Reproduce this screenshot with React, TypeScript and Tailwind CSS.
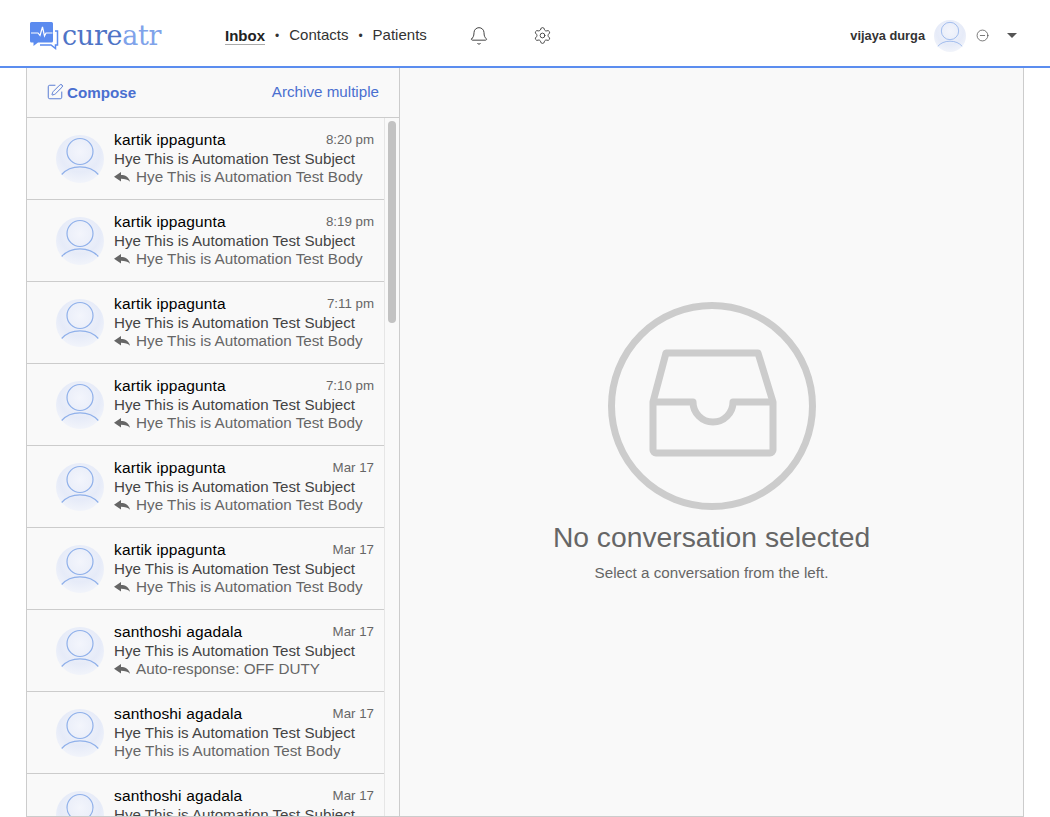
import { Bell, Settings, SquarePen, CircleMinus } from "lucide-react";

const font = "font-['Liberation_Sans',Arial,sans-serif]";

type Msg = { name: string; time: string; body: string; reply: boolean };

const messages: Msg[] = [
  { name: "kartik ippagunta", time: "8:20 pm", body: "Hye This is Automation Test Body", reply: true },
  { name: "kartik ippagunta", time: "8:19 pm", body: "Hye This is Automation Test Body", reply: true },
  { name: "kartik ippagunta", time: "7:11 pm", body: "Hye This is Automation Test Body", reply: true },
  { name: "kartik ippagunta", time: "7:10 pm", body: "Hye This is Automation Test Body", reply: true },
  { name: "kartik ippagunta", time: "Mar 17", body: "Hye This is Automation Test Body", reply: true },
  { name: "kartik ippagunta", time: "Mar 17", body: "Hye This is Automation Test Body", reply: true },
  { name: "santhoshi agadala", time: "Mar 17", body: "Auto-response: OFF DUTY", reply: true },
  { name: "santhoshi agadala", time: "Mar 17", body: "Hye This is Automation Test Body", reply: false },
  { name: "santhoshi agadala", time: "Mar 17", body: "Hye This is Automation Test Body", reply: false },
];

const Avatar = ({ size }: { size: number }) => (
  <svg width={size} height={size} viewBox="0 0 48 48" className="shrink-0">
    <defs>
      <radialGradient id="av" cx="0.5" cy="0.35" r="0.7">
        <stop offset="0" stopColor="#f3f5fc" />
        <stop offset="0.6" stopColor="#e6ebf8" />
        <stop offset="1" stopColor="#f4f6fb" />
      </radialGradient>
    </defs>
    <circle cx="24" cy="24" r="24" fill="url(#av)" />
    <g fill="none" stroke="#8fb0ea" strokeWidth="1.200">
      <circle cx="24" cy="16.500" r="13" />
      <path d="M5.700 39.500C10 34.500 16 31.800 24 31.800s14 2.700 18.300 7.700" />
    </g>
  </svg>
);

const ReplyArrow = () => (
  <svg width="16" height="10" viewBox="0 0 16 10" className="shrink-0">
    <path d="M0 4.800L7 0V3C11 3 15 4.800 16 9.800C13.800 7.400 11 6.700 7 6.700V9.600Z" fill="#666" />
  </svg>
);

const Logo = () => (
  <div className="flex w-[132px] shrink-0 items-center">
    <svg width="30" height="28" viewBox="0 0 30 28" className="shrink-0">
      <path d="M1.500 0H21.500A1.500 1.500 0 0 1 23 1.500V19A1.500 1.500 0 0 1 21.500 20.500H8L3.500 24V20.500H1.500A1.500 1.500 0 0 1 0 19V1.500A1.500 1.500 0 0 1 1.500 0Z" fill="#5b8bef" />
      <path d="M25 9H27.500V23H25.500V26.500L21 23H10" fill="none" stroke="#5b8bef" strokeWidth="1.500" />
      <path d="M1 11H8L10 13.500L12.500 5L14.500 14L16 11H22.500" fill="none" stroke="#fff" strokeWidth="1.200" />
    </svg>
    <span className="ml-[2px] font-['DejaVu_Serif',serif] text-[27px] leading-none tracking-[-0.3px] text-[#4f74c6] font-light">
      cure<span className="text-[#7fa3ea]">atr</span>
    </span>
  </div>
);

const Row = ({ m }: { m: Msg }) => (
  <div className="flex h-[82px] shrink-0 border-b border-[#cccccc] pl-[29px] pr-[10px] pt-[17px]">
    <Avatar size={48} />
    <div className="ml-[10px] min-w-0 flex-1 -mt-[3px] text-[15.150px] leading-[18px]">
      <div className="-mt-[1px] flex items-center justify-between">
        <span className="text-[15.500px] tracking-[0.15px] text-black">{m.name}</span>
        <span className="text-[13.300px] text-[#666]">{m.time}</span>
      </div>
      <div className="mt-[1px] text-[#444]">Hye This is Automation Test Subject</div>
      <div className="flex items-center gap-[6px] text-[15.250px] text-[#666]">
        {m.reply && <ReplyArrow />}
        <span>{m.body}</span>
      </div>
    </div>
  </div>
);

export default function App() {
  return (
    <div className={`${font} flex h-[817px] w-[1050px] flex-col overflow-hidden bg-white`}>
      <header className="flex h-[68px] shrink-0 items-center border-b-2 border-[#5b8def] pl-[30px] pr-[33px] pt-[5px]">
        <Logo />
        <nav className="ml-[63px] flex items-center text-[15px] text-[#333]">
          <span className="border-b border-[#aaa] font-bold leading-[17px] text-[#222]">Inbox</span>
          <span className="mx-[10px] text-[12px]">•</span>
          <span>Contacts</span>
          <span className="mx-[10px] text-[12px]">•</span>
          <span>Patients</span>
        </nav>
        <Bell size={20} strokeWidth={1.200} className="ml-[42px] text-[#444]" />
        <Settings size={19} strokeWidth={1.200} className="ml-[44px] text-[#444]" />
        <div className="ml-auto flex items-center">
          <span className="text-[12.800px] font-bold text-[#333]">vijaya durga</span>
          <span className="ml-[9px]"><Avatar size={32} /></span>
          <CircleMinus size={13} strokeWidth={1.300} className="ml-[10px] text-[#444]" />
          <span className="ml-[18px] h-0 w-0 border-x-[5px] border-t-[5px] border-x-transparent border-t-[#555]" />
        </div>
      </header>

      <main className="ml-[26px] flex min-h-0 w-[998px] flex-1 border-x border-b border-[#cccccc] bg-[#f9f9f9]">
        <aside className="flex w-[373px] shrink-0 flex-col border-r border-[#cccccc]">
          <div className="flex h-[50px] shrink-0 items-center justify-between border-b border-[#cccccc] pl-[19px] pr-[20px]">
            <div className="flex items-center gap-[3px] text-[15.200px] font-bold text-[#4a6fd0]">
              <SquarePen size={18} strokeWidth={1.200} />
              <span className="mt-[1px]">Compose</span>
            </div>
            <span className="text-[15.200px] text-[#4a6fd0]">Archive multiple</span>
          </div>
          <div className="flex min-h-0 flex-1">
            <div className="flex min-w-0 flex-1 flex-col overflow-hidden border-r border-[#e6e6e6]">
              {messages.map((m, i) => (
                <Row key={i} m={m} />
              ))}
            </div>
            <div className="w-[14px] shrink-0 px-[3px] pt-[3px]">
              <div className="h-[202px] rounded-full bg-[#c2c2c2]" />
            </div>
          </div>
        </aside>

        <section className="flex min-w-0 flex-1 flex-col items-center pt-[234px]">
          <svg width="208" height="208" viewBox="0 0 208 208" fill="none" stroke="#cccccc" strokeWidth="7" strokeLinejoin="round">
            <circle cx="104" cy="104" r="100.500" />
            <path d="M45 100H85A20 20 0 0 0 125 100H165" />
            <path d="M45 100L58 51H150L165 100V148A3 3 0 0 1 162 151H48A3 3 0 0 1 45 148Z" />
          </svg>
          <h1 className="mt-[11px] text-[28.250px] leading-[32px] text-[#666]">No conversation selected</h1>
          <p className="mt-[11px] text-[15.200px] leading-[18px] text-[#666]">Select a conversation from the left.</p>
        </section>
      </main>
    </div>
  );
}
